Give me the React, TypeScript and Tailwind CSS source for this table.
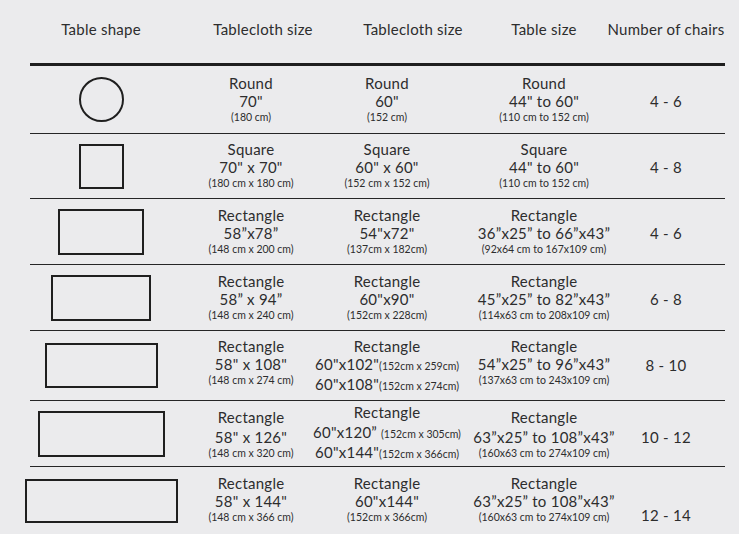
import React from "react";

const Big = ({ children, className = "" }: { children: React.ReactNode; className?: string }) => (
  <div className={"text-[15px] leading-[18px] tracking-[0.25px] whitespace-nowrap " + className}>{children}</div>
);
const Small = ({ children, className = "" }: { children: React.ReactNode; className?: string }) => (
  <div className={"text-[10.5px] leading-[14px] whitespace-nowrap " + className}>{children}</div>
);

function Cell({ w, pt, children }: { w: string; pt: string; children: React.ReactNode }) {
  return <div className={"flex flex-col items-center shrink-0 " + w + " " + pt}>{children}</div>;
}

function Std({ a, b, c }: { a: string; b: string; c: string }) {
  return (
    <>
      <Big>{a}</Big>
      <Big>{b}</Big>
      <Small>{c}</Small>
    </>
  );
}

function Shape({ children }: { children: React.ReactNode }) {
  return <div className="w-[142px] shrink-0 flex items-center justify-center">{children}</div>;
}

export default function App() {
  return (
    <div
      className="w-[739px] h-[534px] overflow-hidden bg-[#ebebed] text-[#2d2d2d]"
      style={{ fontFamily: "Lato, 'Open Sans', sans-serif" }}
    >
      <div className="ml-[30px] w-[695px]">
        {/* header */}
        <div className="h-[63px] flex pt-[20px] text-[15px] leading-[18px] tracking-[0.25px]">
          <div className="w-[142px] shrink-0 flex justify-center whitespace-nowrap">Table shape</div>
          <div className="w-[182px] shrink-0 flex justify-center whitespace-nowrap">Tablecloth size</div>
          <div className="w-[118px] shrink-0 flex justify-center whitespace-nowrap">Tablecloth size</div>
          <div className="w-[144px] shrink-0 flex justify-center whitespace-nowrap">Table size</div>
          <div className="w-[100px] shrink-0 flex justify-center whitespace-nowrap">Number of chairs</div>
        </div>
        <div className="border-t-[3px] border-[#1f1f1f]">
          {/* row 1 */}
          <div className="h-[68px] border-b border-[#262626] flex">
            <Shape>
              <div className="w-[45px] h-[45px] shrink-0 rounded-full border-2 border-[#1f1f1f]" />
            </Shape>
            <Cell w="w-[158px]" pt="pt-[8px]"><Std a="Round" b={'70"'} c="(180 cm)" /></Cell>
            <Cell w="w-[114px]" pt="pt-[8px]"><Std a="Round" b={'60"'} c="(152 cm)" /></Cell>
            <Cell w="w-[200px]" pt="pt-[8px]"><Std a="Round" b={'44" to 60"'} c="(110 cm to 152 cm)" /></Cell>
            <Cell w="w-[44px]" pt="pt-[26px]"><Big>4 - 6</Big></Cell>
          </div>
          {/* row 2 */}
          <div className="h-[65px] border-b border-[#262626] flex">
            <Shape>
              <div className="w-[45px] h-[45px] shrink-0 border-2 border-[#1f1f1f]" />
            </Shape>
            <Cell w="w-[158px]" pt="pt-[6px]"><Std a="Square" b={'70" x 70"'} c="(180 cm x 180 cm)" /></Cell>
            <Cell w="w-[114px]" pt="pt-[6px]"><Std a="Square" b={'60" x 60"'} c="(152 cm x 152 cm)" /></Cell>
            <Cell w="w-[200px]" pt="pt-[6px]"><Std a="Square" b={'44" to 60"'} c="(110 cm to 152 cm)" /></Cell>
            <Cell w="w-[44px]" pt="pt-[24px]"><Big>4 - 8</Big></Cell>
          </div>
          {/* row 3 */}
          <div className="h-[66px] border-b border-[#262626] flex">
            <Shape>
              <div className="w-[86px] h-[46px] shrink-0 border-2 border-[#1f1f1f]" />
            </Shape>
            <Cell w="w-[158px]" pt="pt-[7px]"><Std a="Rectangle" b="58”x78”" c="(148 cm x 200 cm)" /></Cell>
            <Cell w="w-[114px]" pt="pt-[7px]"><Std a="Rectangle" b={'54"x72"'} c="(137cm x 182cm)" /></Cell>
            <Cell w="w-[200px]" pt="pt-[7px]"><Std a="Rectangle" b="36”x25” to 66”x43”" c="(92x64 cm to 167x109 cm)" /></Cell>
            <Cell w="w-[44px]" pt="pt-[25px]"><Big>4 - 6</Big></Cell>
          </div>
          {/* row 4 */}
          <div className="h-[66px] border-b border-[#262626] flex">
            <Shape>
              <div className="w-[100px] h-[46px] shrink-0 border-2 border-[#1f1f1f]" />
            </Shape>
            <Cell w="w-[158px]" pt="pt-[7px]"><Std a="Rectangle" b="58” x 94”" c="(148 cm x 240 cm)" /></Cell>
            <Cell w="w-[114px]" pt="pt-[7px]"><Std a="Rectangle" b={'60"x90"'} c="(152cm x 228cm)" /></Cell>
            <Cell w="w-[200px]" pt="pt-[7px]"><Std a="Rectangle" b="45”x25” to 82”x43”" c="(114x63 cm to 208x109 cm)" /></Cell>
            <Cell w="w-[44px]" pt="pt-[25px]"><Big>6 - 8</Big></Cell>
          </div>
          {/* row 5 */}
          <div className="h-[70px] border-b border-[#262626] flex">
            <Shape>
              <div className="w-[113px] h-[45px] shrink-0 border-2 border-[#1f1f1f]" />
            </Shape>
            <Cell w="w-[158px]" pt="pt-[6px]"><Std a="Rectangle" b={'58" x 108"'} c="(148 cm x 274 cm)" /></Cell>
            <Cell w="w-[114px]" pt="pt-[6px]">
              <Big>Rectangle</Big>
              <Big>60"x102"<span className="text-[10.5px] tracking-normal">(152cm x 259cm)</span></Big>
              <Big>60"x108"<span className="text-[10.5px] tracking-normal">(152cm x 274cm)</span></Big>
            </Cell>
            <Cell w="w-[200px]" pt="pt-[6px]"><Std a="Rectangle" b="54”x25” to 96”x43”" c="(137x63 cm to 243x109 cm)" /></Cell>
            <Cell w="w-[44px]" pt="pt-[25px]"><Big>8 - 10</Big></Cell>
          </div>
          {/* row 6 */}
          <div className="h-[66px] border-b border-[#262626] flex">
            <Shape>
              <div className="w-[127px] h-[46px] shrink-0 border-2 border-[#1f1f1f]" />
            </Shape>
            <Cell w="w-[158px]" pt="pt-[7px]">
              <Big>Rectangle</Big>
              <Big className="mt-[2px]">58" x 126"</Big>
              <Small>(148 cm x 320 cm)</Small>
            </Cell>
            <Cell w="w-[114px]" pt="pt-[2px]">
              <Big>Rectangle</Big>
              <Big className="mt-[2px]">60"x120” <span className="text-[10.5px] tracking-normal">(152cm x 305cm)</span></Big>
              <Big>60"x144"<span className="text-[10.5px] tracking-normal">(152cm x 366cm)</span></Big>
            </Cell>
            <Cell w="w-[200px]" pt="pt-[7px]">
              <Big>Rectangle</Big>
              <Big className="mt-[2px]">63”x25” to 108”x43”</Big>
              <Small>(160x63 cm to 274x109 cm)</Small>
            </Cell>
            <Cell w="w-[44px]" pt="pt-[27px]"><Big>10 - 12</Big></Cell>
          </div>
          {/* row 7 */}
          <div className="h-[67px] flex">
            <Shape>
              <div className="w-[153px] h-[44px] shrink-0 border-2 border-[#1f1f1f]" />
            </Shape>
            <Cell w="w-[158px]" pt="pt-[7px]"><Std a="Rectangle" b={'58" x 144"'} c="(148 cm x 366 cm)" /></Cell>
            <Cell w="w-[114px]" pt="pt-[7px]"><Std a="Rectangle" b={'60"x144"'} c="(152cm x 366cm)" /></Cell>
            <Cell w="w-[200px]" pt="pt-[7px]"><Std a="Rectangle" b="63”x25” to 108”x43”" c="(160x63 cm to 274x109 cm)" /></Cell>
            <Cell w="w-[44px]" pt="pt-[39px]"><Big>12 - 14</Big></Cell>
          </div>
        </div>
      </div>
    </div>
  );
}
